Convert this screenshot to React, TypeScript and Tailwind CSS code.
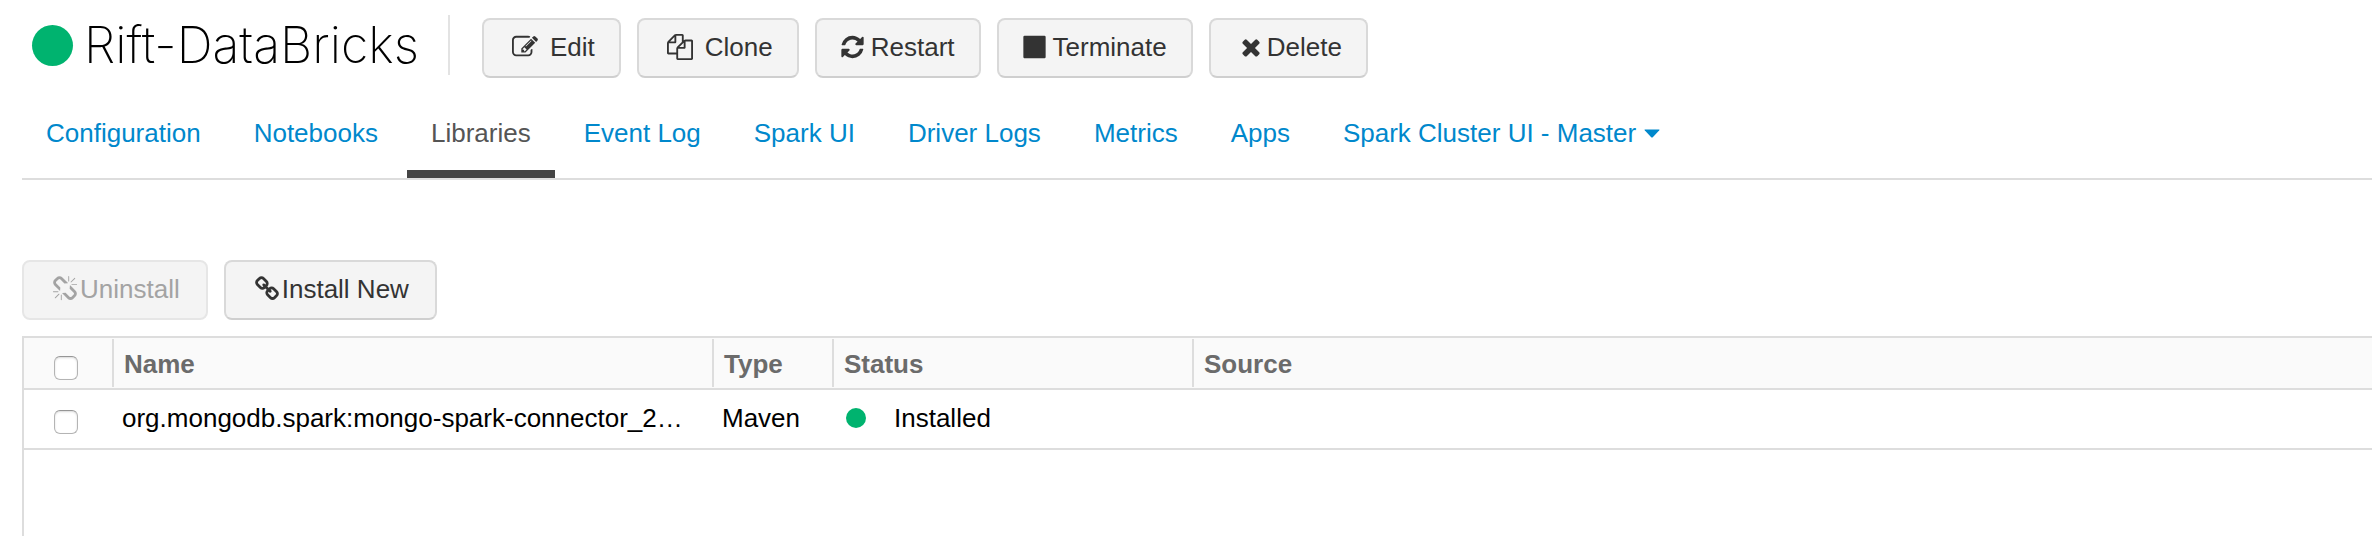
import React from "react";

const icons = {
  edit: "M888 1184l116-116-152-152-116 116v56h96v96h56zm440-720q-16-16-33 1l-350 350q-17 17-1 33t33-1l350-350q17-17 1-33zm80 594v190q0 119-84.5 203.5t-203.5 84.5h-832q-119 0-203.5-84.5t-84.5-203.5v-832q0-119 84.5-203.5t203.5-84.5h832q63 0 117 25 15 7 18 23 3 17-9 29l-49 49q-14 14-32 8-23-6-45-6h-832q-66 0-113 47t-47 113v832q0 66 47 113t113 47h832q66 0 113-47t47-113v-126q0-13 9-22l64-64q15-15 35-7t20 29zm-96-738l288 288-672 672h-288v-288zm444 132l-92 92-288-288 92-92q28-28 68-28t68 28l152 152q28 28 28 68t-28 68z",
  clone: "M1696 384q40 0 68 28t28 68v1216q0 40-28 68t-68 28h-960q-40 0-68-28t-28-68v-288h-544q-40 0-68-28t-28-68v-672q0-40 20-88t48-76l408-408q28-28 76-48t88-20h416q40 0 68 28t28 68v328q68-40 128-40h416zm-544 213l-299 299h299v-299zm-640-384l-299 299h299v-299zm196 647l316-316v-416h-384v416q0 40-28 68t-68 28h-416v640h512v-256q0-40 20-88t48-76zm956 804v-1152h-384v416q0 40-28 68t-68 28h-416v640h896z",
  restart: "M1639 1056q0 5-1 7-64 268-268 434.5t-478 166.5q-146 0-282.5-55t-243.5-157l-129 129q-19 19-45 19t-45-19-19-45v-448q0-26 19-45t45-19h448q26 0 45 19t19 45-19 45l-137 137q71 66 161 102t187 36q134 0 250-65t186-179q11-17 53-117 8-23 30-23h192q13 0 22.5 9.5t9.5 22.5zm25-800v448q0 26-19 45t-45 19h-448q-26 0-45-19t-19-45 19-45l138-138q-148-137-349-137-134 0-250 65t-186 179q-11 17-53 117-8 23-30 23h-199q-13 0-22.5-9.5t-9.5-22.5v-7q65-268 270-434.5t480-166.5q146 0 284 55.5t245 156.5l130-129q19-19 45-19t45 19 19 45z",
  stop: "M1664 192v1408q0 26-19 45t-45 19h-1408q-26 0-45-19t-19-45v-1408q0-26 19-45t45-19h1408q26 0 45 19t19 45z",
  remove: "M1490 1322q0 40-28 68l-136 136q-28 28-68 28t-68-28l-294-294-294 294q-28 28-68 28t-68-28l-136-136q-28-28-28-68t28-68l294-294-294-294q-28-28-28-68t28-68l136-136q28-28 68-28t68 28l294 294 294-294q28-28 68-28t68 28l136 136q28 28 28 68t-28 68l-294 294 294 294q28 28 28 68z",
  link: "M1520 1216q0-40-28-68l-208-208q-28-28-68-28-42 0-72 32 3 3 19 18.5t21.5 21.5 15 19 13 25.5 3.5 27.5q0 40-28 68t-68 28q-15 0-27.5-3.5t-25.5-13-19-15-21.5-21.5-18.5-19q-33 31-33 73 0 40 28 68l206 207q27 27 68 27 40 0 68-26l147-146q28-28 28-67zm-703-705q0-40-28-68l-206-207q-28-28-68-28-39 0-68 27l-147 146q-28 28-28 67 0 40 28 68l208 208q27 27 68 27 42 0 72-31-3-3-19-18.5t-21.5-21.5-15-19-13-25.5-3.5-27.5q0-40 28-68t68-28q15 0 27.5 3.5t25.5 13 19 15 21.5 21.5 18.5 19q33-31 33-73zm895 705q0 120-85 203l-147 146q-83 83-203 83-121 0-204-85l-206-207q-83-83-83-203 0-123 88-209l-88-88q-86 88-208 88-120 0-204-84l-208-208q-84-84-84-204t85-203l147-146q83-83 203-83 121 0 204 85l206 207q83 83 83 203 0 123-88 209l88 88q86-88 208-88 120 0 204 84l208 208q84 84 84 204z",
  unlink: "M503 1271l-256 256q-10 9-23 9-12 0-23-9-9-10-9-23t9-23l256-256q10-9 23-9t23 9q9 10 9 23t-9 23zm169 41v320q0 14-9 23t-23 9-23-9-9-23v-320q0-14 9-23t23-9 23 9 9 23zm-224-224q0 14-9 23t-23 9h-320q-14 0-23-9t-9-23 9-23 23-9h320q14 0 23 9t9 23zm1264 128q0 120-85 203l-147 146q-83 83-203 83-121 0-204-85l-334-335q-21-21-42-56l239-18 273 274q28 28 68 27.5t68-27.5l147-146q28-28 28-67 0-40-28-68l-274-275 18-239q35 21 56 42l336 336q84 86 84 204zm-617-724l-239 18-273-274q-28-28-68-28-39 0-68 27l-147 146q-28 28-28 67 0 40 28 68l274 274-18 240q-35-21-56-42l-336-336q-84-86-84-204 0-120 85-203l147-146q83-83 203-83 121 0 204 85l334 335q21 21 42 56zm633 84q0 14-9 23t-23 9h-320q-14 0-23-9t-9-23 9-23 23-9h320q14 0 23 9t9 23zm-544-544v320q0 14-9 23t-23 9-23-9-9-23v-320q0-14 9-23t23-9 23 9 9 23zm407 151l-256 256q-11 9-23 9t-23-9q-9-10-9-23t9-23l256-256q10-9 23-9t23 9q9 10 9 23t-9 23z",
};

type IconName = keyof typeof icons;

function Icon({ name }: { name: IconName }) {
  // The refresh and stop glyphs are narrower than the square em box.
  const narrow = name === "restart" || name === "stop";
  return (
    <svg
      viewBox={narrow ? "128 0 1536 1792" : "0 0 1792 1792"}
      className={`h-[26px] shrink-0 ${narrow ? "w-[23px]" : "w-[26px]"}`}
      fill="currentColor"
      aria-hidden="true"
    >
      <path d={icons[name]} />
    </svg>
  );
}

function ToolButton({
  icon,
  label,
  slot,
  pad = "px-6",
  disabled = false,
}: {
  icon: IconName;
  label: string;
  slot: string;
  pad?: string;
  disabled?: boolean;
}) {
  return (
    <button
      type="button"
      disabled={disabled}
      className={`flex h-[60px] items-center rounded-lg border-2 border-[#d9d9d9] border-b-[#cfcfcf] bg-[#f4f4f4] pb-[2px] text-[#333] ${pad} disabled:border-[#e6e6e6] disabled:text-[#a3a3a3]`}
    >
      <span className={`flex shrink-0 ${slot}`}>
        <Icon name={icon} />
      </span>
      <span className="whitespace-nowrap">{label}</span>
    </button>
  );
}

const tabs = [
  "Configuration",
  "Notebooks",
  "Libraries",
  "Event Log",
  "Spark UI",
  "Driver Logs",
  "Metrics",
  "Apps",
  "Spark Cluster UI - Master",
];

function Check({ label }: { label: string }) {
  return (
    <input
      type="checkbox"
      aria-label={label}
      className="block size-6 appearance-none rounded-md border border-[#b4b4b4] border-t-[#969696] bg-white shadow-[inset_0_1px_2px_rgba(0,0,0,0.15)]"
    />
  );
}

export default function App() {
  return (
    <div className="flex min-h-screen flex-col bg-white pl-[22px] font-['Liberation_Sans',Arial,sans-serif] text-[26px] leading-8 text-black">
      <header className="flex items-center pt-[15px]">
        <span className="ml-[10px] size-[41px] shrink-0 rounded-full bg-[#00b36f]" />
        <h1 className="ml-[11px] w-[364px] whitespace-nowrap font-['Inter',sans-serif] text-[50px] leading-[60px] font-extralight">
          Rift-DataBricks
        </h1>
        <div className="border-l-2 border-[#e3e3e3] pl-8">
          <div className="-mb-[3px] flex gap-4 pt-[3px]">
            <ToolButton icon="edit" label="Edit" slot="w-[42px] pl-1" />
            <ToolButton icon="clone" label="Clone" slot="w-[42px] pl-1" />
            <ToolButton icon="restart" label="Restart" slot="w-[30px]" />
            <ToolButton icon="stop" label="Terminate" slot="w-[30px]" />
            <ToolButton icon="remove" label="Delete" slot="w-8 justify-center" />
          </div>
        </div>
      </header>

      <nav className="mt-[31px] flex gap-[5px] border-b-2 border-[#ddd]">
        {tabs.map((tab) => {
          const active = tab === "Libraries";
          return (
            <a
              key={tab}
              href="#"
              aria-current={active ? "page" : undefined}
              className={`flex h-[72px] items-start whitespace-nowrap border-b-8 px-6 pt-[11px] ${
                active ? "border-[#444] text-[#555]" : "border-transparent text-[#0088cc]"
              }`}
            >
              {tab}
              {tab.endsWith("Master") && (
                <svg viewBox="0 0 16 9" className="ml-2 mt-3 h-[9px] w-4" fill="currentColor" aria-hidden="true">
                  <path d="M1 0.5h14q1 0 .3.8L8.8 8.2q-.8.8-1.6 0L.7 1.3Q0 .5 1 .5z" />
                </svg>
              )}
            </a>
          );
        })}
      </nav>

      <div className="mt-20 flex gap-4">
        <ToolButton icon="unlink" label="Uninstall" slot="w-[30px] justify-center" pad="px-[26px]" disabled />
        <ToolButton icon="link" label="Install New" slot="w-[30px] justify-center" pad="px-[26px]" />
      </div>

      <main className="mt-4 grow border-l-2 border-t-2 border-[#ddd]">
        <table className="w-full table-fixed border-collapse text-left">
          <colgroup>
            <col className="w-[90px]" />
            <col className="w-[600px]" />
            <col className="w-[120px]" />
            <col className="w-[360px]" />
            <col />
          </colgroup>
          <thead className="bg-[#fafafa] text-[#6b6b6b]">
            <tr className="h-[52px] shadow-[inset_0_-2px_0_#ddd]">
              <th className="p-0 pb-[2px]">
                <div className="flex h-12 items-center border-r-2 border-[#ddd] pl-[30px] pt-[10px]">
                  <Check label="Select all libraries" />
                </div>
              </th>
              <th className="p-0 pb-[2px]">
                <div className="flex h-12 items-center border-r-2 border-[#ddd] pl-[10px] pt-[2px]">Name</div>
              </th>
              <th className="p-0 pb-[2px]">
                <div className="flex h-12 items-center border-r-2 border-[#ddd] pl-[10px] pt-[2px]">Type</div>
              </th>
              <th className="p-0 pb-[2px]">
                <div className="flex h-12 items-center border-r-2 border-[#ddd] pl-[10px] pt-[2px]">Status</div>
              </th>
              <th className="p-0 pb-[2px]">
                <div className="flex h-12 items-center pl-[10px] pt-[2px]">Source</div>
              </th>
            </tr>
          </thead>
          <tbody>
            <tr className="h-[60px] shadow-[inset_0_-2px_0_#ddd]">
              <td className="p-0 pl-[30px] pt-1">
                <Check label="Select library" />
              </td>
              <td className="whitespace-nowrap p-0 pb-1 pl-2">org.mongodb.spark:mongo-spark-connector_2…</td>
              <td className="p-0 pb-1 pl-2">Maven</td>
              <td className="p-0 pb-1 pl-3">
                <div className="flex items-center">
                  <span className="size-5 rounded-full bg-[#00b36f]" />
                  <span className="ml-7">Installed</span>
                </div>
              </td>
              <td className="p-0" />
            </tr>
          </tbody>
        </table>
      </main>
    </div>
  );
}
